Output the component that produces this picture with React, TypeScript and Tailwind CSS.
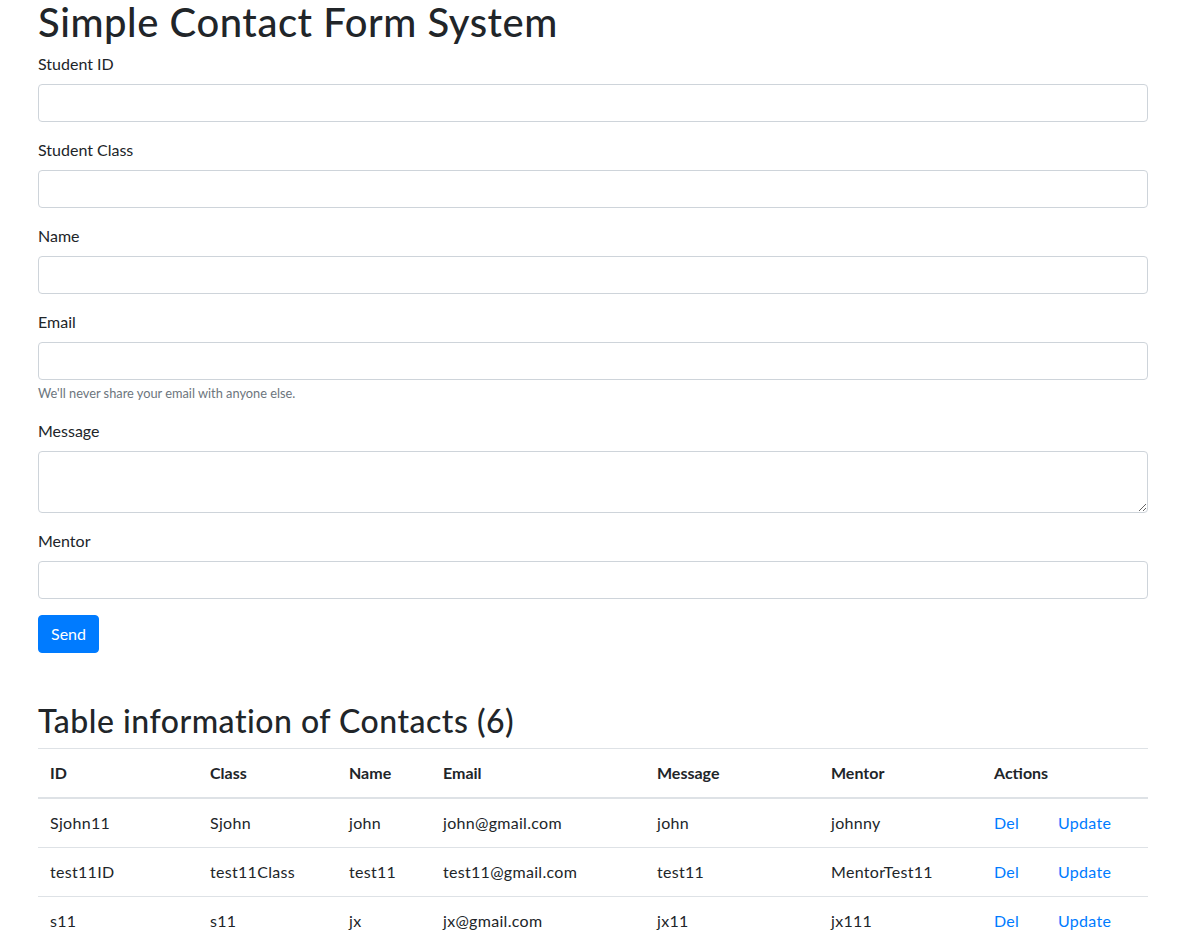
import React, { useState } from "react";

type Contact = {
  id: string;
  cls: string;
  name: string;
  email: string;
  message: string;
  mentor: string;
};

const contacts: Contact[] = [
  { id: "Sjohn11", cls: "Sjohn", name: "john", email: "john@gmail.com", message: "john", mentor: "johnny" },
  { id: "test11ID", cls: "test11Class", name: "test11", email: "test11@gmail.com", message: "test11", mentor: "MentorTest11" },
  { id: "s11", cls: "s11", name: "jx", email: "jx@gmail.com", message: "jx11", mentor: "jx111" },
];

const inputClass =
  "block w-full h-[38px] px-3 py-[6px] border border-[#ced4da] rounded-[4px] bg-white text-[16px] text-[#495057] outline-none focus:border-[#80bdff]";

const cellClass = "p-3 border-t border-[#dee2e6] tracking-[0.3px]";

const Field = ({ label, children }: { label: string; children: React.ReactNode }) => (
  <div className="mb-4">
    <label className="block mb-2 leading-6 text-[16px]">{label}</label>
    {children}
  </div>
);

const App = () => {
  const [form, setForm] = useState({
    id: "",
    cls: "",
    name: "",
    email: "",
    message: "",
    mentor: "",
  });

  const update = (key: keyof typeof form) => (e: React.ChangeEvent<HTMLInputElement | HTMLTextAreaElement>) =>
    setForm({ ...form, [key]: e.target.value });

  return (
    <div
      className="min-h-screen bg-white text-[#212529] text-[16px] leading-6"
      style={{ fontFamily: "'Segoe UI', Lato, 'Liberation Sans', sans-serif" }}
    >
      <div className="ml-[38px] w-[1110px]">
        <h1 className="text-[40px] leading-[44px] font-medium tracking-[0.55px] mb-2">Simple Contact Form System</h1>

        <form onSubmit={(e) => e.preventDefault()}>
          <Field label="Student ID">
            <input type="text" value={form.id} onChange={update("id")} className={inputClass} />
          </Field>
          <Field label="Student Class">
            <input type="text" value={form.cls} onChange={update("cls")} className={inputClass} />
          </Field>
          <Field label="Name">
            <input type="text" value={form.name} onChange={update("name")} className={inputClass} />
          </Field>
          <div className="mb-4">
            <label className="block mb-2 leading-6">Email</label>
            <input type="email" value={form.email} onChange={update("email")} className={inputClass} />
            <small className="block mt-1 text-[12.8px] leading-[19.2px] text-[#6c757d]">
              We'll never share your email with anyone else.
            </small>
          </div>
          <div className="mb-4">
            <label className="block mb-2 leading-6">Message</label>
            <textarea
              rows={2}
              value={form.message}
              onChange={update("message")}
              className="block w-full h-[62px] px-3 py-[6px] border border-[#ced4da] rounded-[4px] bg-white text-[16px] text-[#495057] outline-none"
            />
          </div>
          <Field label="Mentor">
            <input type="text" value={form.mentor} onChange={update("mentor")} className={inputClass} />
          </Field>
          <button
            type="submit"
            className="h-[38px] px-3 bg-[#007bff] text-white rounded-[4px] border border-[#007bff] text-[16px] leading-6"
          >
            Send
          </button>
        </form>

        <h2 className="mt-[49px] mb-2 text-[32px] leading-[38px] font-medium tracking-[0.5px]">
          Table information of Contacts (6)
        </h2>

        <table className="w-full border-collapse text-left">
          <colgroup>
            <col className="w-[160px]" />
            <col className="w-[139px]" />
            <col className="w-[94px]" />
            <col className="w-[214px]" />
            <col className="w-[174px]" />
            <col className="w-[163px]" />
            <col className="w-[166px]" />
          </colgroup>
          <thead>
            <tr>
              {["ID", "Class", "Name", "Email", "Message", "Mentor", "Actions"].map((h) => (
                <th
                  key={h}
                  className="p-3 font-bold border-t border-[#dee2e6] border-b-2 align-bottom"
                >
                  {h}
                </th>
              ))}
            </tr>
          </thead>
          <tbody>
            {contacts.map((c) => (
              <tr key={c.id}>
                <td className={cellClass}>{c.id}</td>
                <td className={cellClass}>{c.cls}</td>
                <td className={cellClass}>{c.name}</td>
                <td className={cellClass}>{c.email}</td>
                <td className={cellClass}>{c.message}</td>
                <td className={cellClass}>{c.mentor}</td>
                <td className={cellClass}>
                  <div className="flex">
                    <a href="#" className="w-[64px] text-[#007bff]">Del</a>
                    <a href="#" className="text-[#007bff]">Update</a>
                  </div>
                </td>
              </tr>
            ))}
          </tbody>
        </table>
      </div>
    </div>
  );
};

export default App;
